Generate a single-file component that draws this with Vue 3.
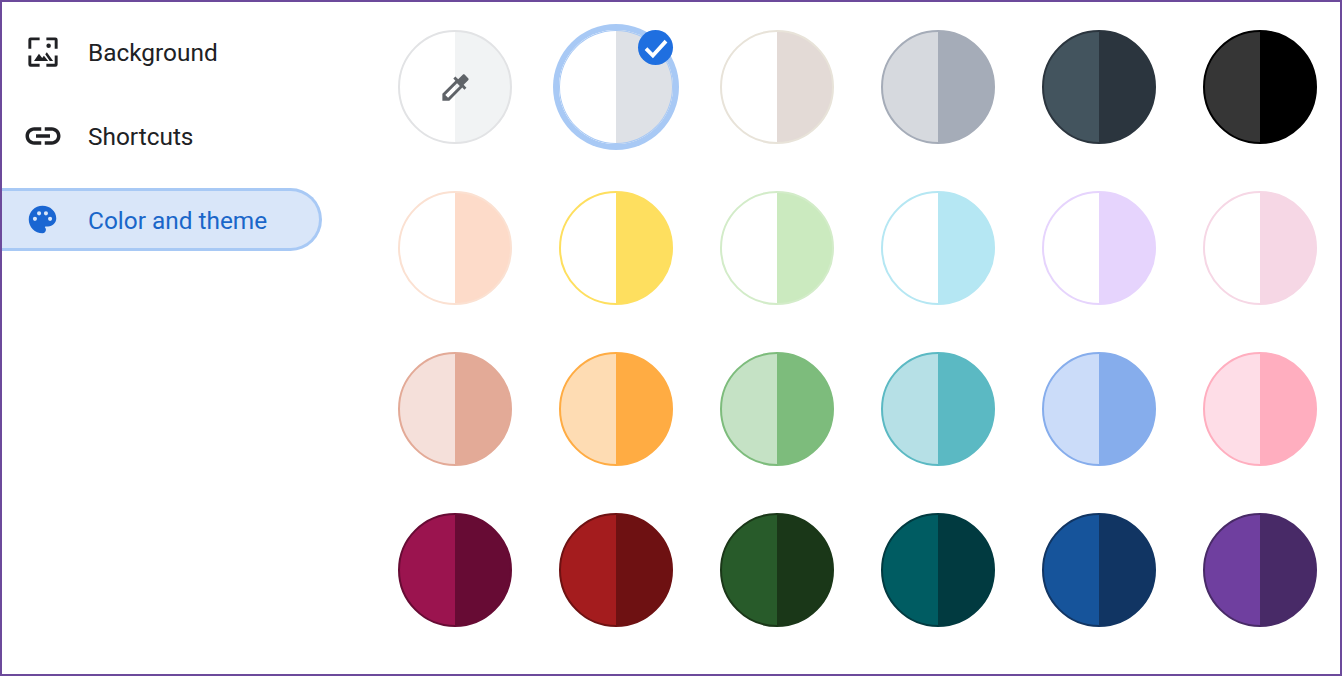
<script setup>
const rows = [
  [['#ffffff', '#f1f3f4', '#e2e3e5'], ['#ffffff', '#dee1e6', '#dee1e6'], ['#ffffff', '#e3dad6', '#e8e3d9'], ['#d6d9de', '#a5acb8', '#a5acb8'], ['#43545e', '#2b353e', '#2b353e'], ['#363636', '#000000', '#000000']],
  [['#ffffff', '#fddbc9', '#fbe1d2'], ['#ffffff', '#fedf5f', '#fedf5f'], ['#ffffff', '#cbeabf', '#d3ecc9'], ['#ffffff', '#b5e7f3', '#b5e7f3'], ['#ffffff', '#e6d4fd', '#e6d4fd'], ['#ffffff', '#f6d7e5', '#f6d7e5']],
  [['#f5e0da', '#e3aa97', '#e3aa97'], ['#fedcb3', '#ffac43', '#ffac43'], ['#c5e2c5', '#7dbc7c', '#7dbc7c'], ['#b6e0e6', '#5bb9c3', '#5bb9c3'], ['#cbdcf9', '#86adec', '#86adec'], ['#fedde7', '#ffaebf', '#ffaebf']],
  [['#9b144f', '#670b34', '#670b34'], ['#a41c1e', '#6e1112', '#6e1112'], ['#285b2a', '#1a3718', '#1a3718'], ['#005c62', '#013a40', '#013a40'], ['#16549b', '#113563', '#113563'], ['#6f3f9f', '#482a67', '#482a67']],
]
const swatches = rows.flat().map(([left, right, edge], index) => ({
  index,
  style: { background: `linear-gradient(90deg, ${left} 50%, ${right} 50%)`, borderColor: edge },
}))
</script>

<template>
  <div class="frame">
    <nav class="side">
      <a class="item">
        <span class="icon">
          <svg width="36" height="36" viewBox="0 0 32 32">
            <path class="ink" d="M3 13V5a2 2 0 0 1 2-2h8v2.6H5.6V13zM19 3h8a2 2 0 0 1 2 2v8h-2.6V5.6H19zM3 19h2.6v7.4H13V29H5a2 2 0 0 1-2-2zM26.400 19H29v8a2 2 0 0 1-2 2h-8v-2.600h7.400z" />
            <circle class="ink" cx="21" cy="10.500" r="2" />
            <path class="ink" d="M8 24l4.400-6.500 2.900 3.800 1.500-2 3.800 4.700zM18 18l1.400-1.800 5.600 7.800h-3z" />
          </svg>
        </span>
        <span class="label">Background</span>
      </a>
      <a class="item">
        <span class="icon">
          <svg width="42" height="42" viewBox="0 0 24 24">
            <path class="ink" d="M17 7h-4v2h4c1.650 0 3 1.350 3 3s-1.350 3-3 3h-4v2h4c2.760 0 5-2.240 5-5s-2.240-5-5-5zm-6 8H7c-1.650 0-3-1.350-3-3s1.350-3 3-3h4V7H7c-2.760 0-5 2.240-5 5s2.240 5 5 5h4v-2zm-3-4h8v2H8z" />
          </svg>
        </span>
        <span class="label">Shortcuts</span>
      </a>
      <a class="item active">
        <span class="icon">
          <svg width="33" height="33" viewBox="0 0 24 24">
            <path class="blue" fill-rule="evenodd" d="M12 2C6.490 2 2 6.490 2 12s4.490 10 10 10c1.380 0 2.500-1.120 2.500-2.500 0-.61-.23-1.200-.64-1.670-.08-.1-.13-.21-.13-.33 0-.28.22-.5.5-.5H16c3.310 0 6-2.690 6-6 0-4.960-4.490-9-10-9zM6.500 13a1.500 1.500 0 1 1 0-3 1.500 1.500 0 0 1 0 3zm3-4a1.500 1.500 0 1 1 0-3 1.500 1.500 0 0 1 0 3zm5 0a1.500 1.500 0 1 1 0-3 1.500 1.500 0 0 1 0 3zm3 4a1.500 1.500 0 1 1 0-3 1.500 1.500 0 0 1 0 3z" />
          </svg>
        </span>
        <span class="label">Color and theme</span>
      </a>
    </nav>
    <section class="grid">
      <div
        v-for="swatch in swatches"
        :key="swatch.index"
        class="swatch"
        :class="{ selected: swatch.index === 1 }"
        :style="swatch.style"
      >
        <svg v-if="swatch.index === 0" width="35" height="35" viewBox="0 0 24 24">
          <path class="grey" d="M20.710 5.630l-2.340-2.340c-.39-.39-1.020-.39-1.410 0l-3.120 3.120-1.930-1.910-1.410 1.410 1.420 1.420L3 16.250V21h4.750l8.920-8.920 1.420 1.420 1.410-1.410-1.920-1.920 3.120-3.120c.4-.4.4-1.040.01-1.420zM6.920 19L5 17.080l8.060-8.060 1.920 1.920L6.920 19z" />
        </svg>
        <span v-if="swatch.index === 1" class="badge">
          <svg width="30" height="30" viewBox="0 0 24 24">
            <path class="tick" d="M4 12.500l5.500 5.500L20 6.500" />
          </svg>
        </span>
      </div>
    </section>
  </div>
</template>

<style>
html, body { margin: 0; background: #fff; }
</style>

<style scoped>
.frame {
  box-sizing: border-box;
  width: 1342px;
  height: 676px;
  border: 2px solid #6c4a9b;
  display: flex;
  background: #fff;
  overflow: hidden;
  font-family: Roboto, "Liberation Sans", sans-serif;
}
.side {
  width: 320px;
  flex: none;
  padding-top: 18px;
  display: flex;
  flex-direction: column;
  gap: 21px;
}
.item {
  box-sizing: border-box;
  height: 63px;
  display: flex;
  align-items: center;
  gap: 23px;
  padding-left: 18px;
  border: 3px solid transparent;
  border-left: 0;
  border-radius: 0 32px 32px 0;
  font-size: 24.4px;
  color: #202124;
}
.label {
  padding-top: 2px;
}
.item.active {
  background: #d9e6f9;
  border-color: #a8c9f5;
  color: #1a66c9;
}
.icon {
  width: 45px;
  height: 45px;
  display: flex;
  align-items: center;
  justify-content: center;
}
.ink { fill: #202124; }
.blue { fill: #1a66d2; }
.grey { fill: #5f6368; }
.grid {
  margin-left: 76px;
  padding-top: 28px;
  display: grid;
  grid-template-columns: repeat(6, 114px);
  grid-auto-rows: 114px;
  gap: 47px;
}
.swatch {
  box-sizing: border-box;
  position: relative;
  width: 114px;
  height: 114px;
  border: 2px solid;
  border-radius: 50%;
  background-origin: border-box !important;
  background-clip: border-box !important;
  display: flex;
  align-items: center;
  justify-content: center;
}
.swatch.selected {
  border: 0;
  box-shadow: 0 0 0 6px #a8c9f5, inset 0 0 0 1px #a8c9f5;
}
.badge {
  position: absolute;
  top: 0;
  right: 0;
  width: 35px;
  height: 35px;
  border-radius: 50%;
  background: #1f6fe0;
  display: flex;
  align-items: center;
  justify-content: center;
}
.tick {
  fill: none;
  stroke: #fff;
  stroke-width: 3;
}
</style>
